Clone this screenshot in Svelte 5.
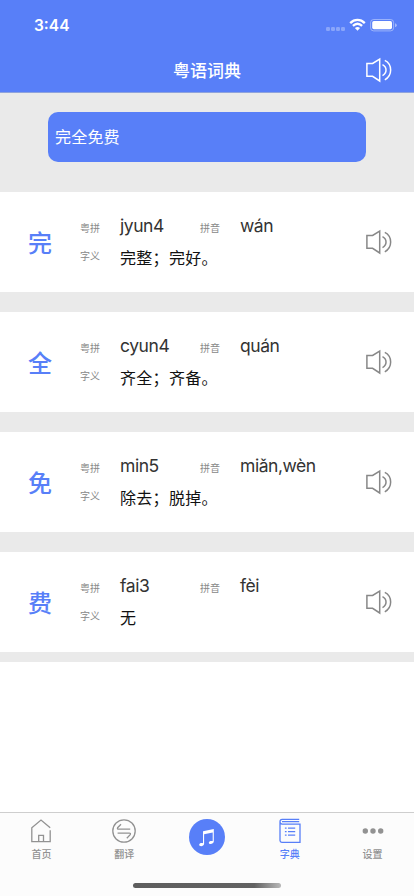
<script>
let query = '完全免费';

const words = [
  { char: '完', jyutping: 'jyun4', pinyin: 'wán', meaning: '完整；完好。' },
  { char: '全', jyutping: 'cyun4', pinyin: 'quán', meaning: '齐全；齐备。' },
  { char: '免', jyutping: 'min5', pinyin: 'miǎn,wèn', meaning: '除去；脱掉。' },
  { char: '费', jyutping: 'fai3', pinyin: 'fèi', meaning: '无' }
];
</script>

{#snippet speaker()}
  <svg class="speaker" width="28" height="26" viewBox="0 0 28 26">
    <path d="M1.9 6.5H7.6L14.7 2V24L7.6 19.3H1.9Z" />
    <path d="M17.5 7.6C22.2 10 22.2 16.2 17.5 18.6M19.8 3.4C27.6 7.4 27.6 18.8 19.8 22.8" />
  </svg>
{/snippet}

<div class="screen">
  <header>
    <div class="status">
      <span class="time">3:44</span>
      <svg width="72" height="14" viewBox="0 0 72 14">
        <g fill="#fff" opacity=".3">
          <rect x="0" y="9" width="4" height="4" rx="1.2" />
          <rect x="5" y="9" width="4" height="4" rx="1.2" />
          <rect x="10" y="9" width="4" height="4" rx="1.2" />
          <rect x="15" y="9" width="4" height="4" rx="1.2" />
        </g>
        <g fill="none" stroke="#fff" stroke-width="2.3">
          <path d="M24.2 5.1C28.5 .9 34.5 .9 38.8 5.1M26.9 7.9C29.7 5.3 33.3 5.3 36.1 7.9" />
        </g>
        <path d="M28.9 10C30.5 8.6 32.5 8.6 34.1 10L31.5 12.7Z" fill="#fff" />
        <rect x="44.6" y="1.5" width="23" height="11.4" rx="3" fill="none" stroke="#fff" opacity=".4" />
        <rect x="46.2" y="3.1" width="19.8" height="8.2" rx="1.7" fill="#fff" />
        <path d="M69 5.2Q70.8 5.8 70.8 7.2T69 9.2Z" fill="#fff" opacity=".45" />
      </svg>
    </div>
    <div class="nav">
      <h1>粤语词典</h1>
      <button aria-label="朗读">{@render speaker()}</button>
    </div>
  </header>

  <main>
    <div class="search">{query}</div>

    {#each words as word}
      <div class="card">
        <div class="char">{word.char}</div>
        <div class="body">
          <span class="label">粤拼</span>
          <span class="sound">{word.jyutping}</span>
          <span class="label">拼音</span>
          <span class="sound">{word.pinyin}</span>
          <span class="label second">字义</span>
          <span class="meaning">{word.meaning}</span>
        </div>
        <button aria-label="朗读">{@render speaker()}</button>
      </div>
    {/each}
  </main>

  <div class="blank"></div>

  <footer>
    <nav>
      <div class="tab">
        <svg width="28" height="28" viewBox="0 0 28 28">
          <path d="M23.2 13.2V24.6H4.8V10.7L14 3L23.2 10.7M11.7 24.6V18.3H16.5V24.6" />
        </svg>
        <span>首页</span>
      </div>
      <div class="tab">
        <svg width="28" height="28" viewBox="0 0 28 28">
          <circle cx="14" cy="14" r="11.2" />
          <path d="M11 7.2L7.6 10.7Q7 12.2 8.6 12.2H20.2M7.6 16.1H19.2Q21 16.1 20.2 17.6L16.8 21.2" />
        </svg>
        <span>翻译</span>
      </div>
      <div class="tab music">
        <svg width="36" height="36" viewBox="0 0 36 36">
          <circle class="disc" cx="18" cy="18" r="18" />
          <path class="note" d="M14 12.3L24.8 9.9V22.6C24.8 25.2 19.8 26 19.8 23.7C19.8 22.2 22 21.5 23.7 22.1V13.4L15.1 15.2V24.8C15.1 27.6 10.2 28.1 10.2 25.8C10.2 24.3 12.3 23.7 14 24.3Z" />
        </svg>
      </div>
      <div class="tab active">
        <svg width="28" height="28" viewBox="0 0 28 28">
          <path d="M23.2 2.4H6.2Q4 2.4 4 4.7T6.2 7.1H24V25.4H5.8Q4 25.4 4 23.6V4.7M6 4.7H23.2" />
          <path d="M8.9 11.2H10.6M12 11.2H19.2M8.9 14.7H10.6M12 14.7H19.2M8.9 18.2H10.6M12 18.2H19.2" />
        </svg>
        <span>字典</span>
      </div>
      <div class="tab">
        <svg class="dots" width="28" height="28" viewBox="0 0 28 28">
          <circle cx="6.3" cy="14" r="2.7" />
          <circle cx="14" cy="14" r="2.7" />
          <circle cx="21.7" cy="14" r="2.7" />
        </svg>
        <span>设置</span>
      </div>
    </nav>
    <div class="home-bar"></div>
  </footer>
</div>

<style>
:global(body) {
  margin: 0;
  background: white;
}
.screen {
  display: flex;
  flex-direction: column;
  width: 414px;
  height: 896px;
  overflow: hidden;
  font-family: Inter, "Noto Sans CJK SC", sans-serif;
}
header {
  box-sizing: border-box;
  height: 93px;
  flex: none;
  background: #587ff8;
  border-bottom: 1px solid #8fa3dc;
  color: white;
}
.status {
  display: flex;
  justify-content: space-between;
  align-items: center;
  height: 48px;
  padding: 2px 16px 0 34px;
  box-sizing: border-box;
}
.time {
  font-size: 15.5px;
  font-weight: 600;
}
.nav {
  display: grid;
  grid-template-columns: 49px 1fr 49px;
  align-items: center;
  height: 44px;
}
h1 {
  grid-column: 2;
  margin: 0;
  padding-top: 2px;
  text-align: center;
  font-size: 17px;
  line-height: 24px;
  font-weight: 500;
}
button {
  display: block;
  width: 28px;
  height: 26px;
  padding: 0;
  border: 0;
  background: none;
  color: inherit;
}
.speaker {
  display: block;
  fill: none;
  stroke: currentColor;
  stroke-width: 1.5;
}
main {
  display: flex;
  flex-direction: column;
  gap: 20px;
  flex: none;
  height: 569px;
  box-sizing: border-box;
  padding-top: 19px;
  background: #eaeaea;
}
.search {
  box-sizing: border-box;
  width: 318px;
  height: 50px;
  margin: 0 0 10px 48px;
  padding-left: 7px;
  border-radius: 10px;
  background: #587ff8;
  color: white;
  font-size: 16px;
  line-height: 50px;
  letter-spacing: 0.2px;
}
.card {
  display: flex;
  align-items: center;
  height: 100px;
  background: white;
  color: #888;
}
.char {
  width: 80px;
  padding-top: 3px;
  text-align: center;
  color: #587ff8;
  font-size: 24px;
  line-height: 32px;
  font-weight: 500;
}
.body {
  display: grid;
  grid-template-columns: 40px 80px 40px 125px;
  grid-template-rows: 32px 32px;
  align-items: center;
  height: 64px;
}
.label {
  padding-top: 4px;
  font-size: 10px;
  line-height: 14px;
  color: #888;
}
.label.second {
  padding: 0 0 5px;
}
.sound {
  color: #333;
  font-size: 17.5px;
  line-height: 24px;
  letter-spacing: -0.45px;
}
.meaning {
  grid-column: 2 / 5;
  color: #111;
  font-size: 16px;
  line-height: 24px;
  letter-spacing: 0.3px;
}
.blank {
  flex: 1;
}
footer {
  box-sizing: border-box;
  height: 84px;
  flex: none;
  border-top: 1px solid #cecece;
  background: #fcfcfc;
}
nav {
  display: flex;
  height: 70px;
}
.tab {
  display: flex;
  flex-direction: column;
  align-items: center;
  flex: 1;
  padding-top: 4px;
  color: #929292;
  font-size: 10px;
  line-height: 14px;
  font-weight: 500;
}
.tab svg {
  display: block;
  fill: none;
  stroke: currentColor;
  stroke-width: 1.3;
}
.tab span {
  margin-top: 2px;
}
.tab.active {
  color: #587ff8;
}
.tab.music {
  padding-top: 6px;
}
.tab .dots {
  fill: currentColor;
  stroke: none;
}
.tab.music svg {
  stroke: none;
}
.disc {
  fill: #587ff8;
}
.note {
  fill: white;
}
.home-bar {
  width: 148px;
  height: 5px;
  margin: 0 auto;
  border-radius: 3px;
  background: linear-gradient(90deg, #5e5e5e, #626262 82%, #b8b8b8);
}
</style>
